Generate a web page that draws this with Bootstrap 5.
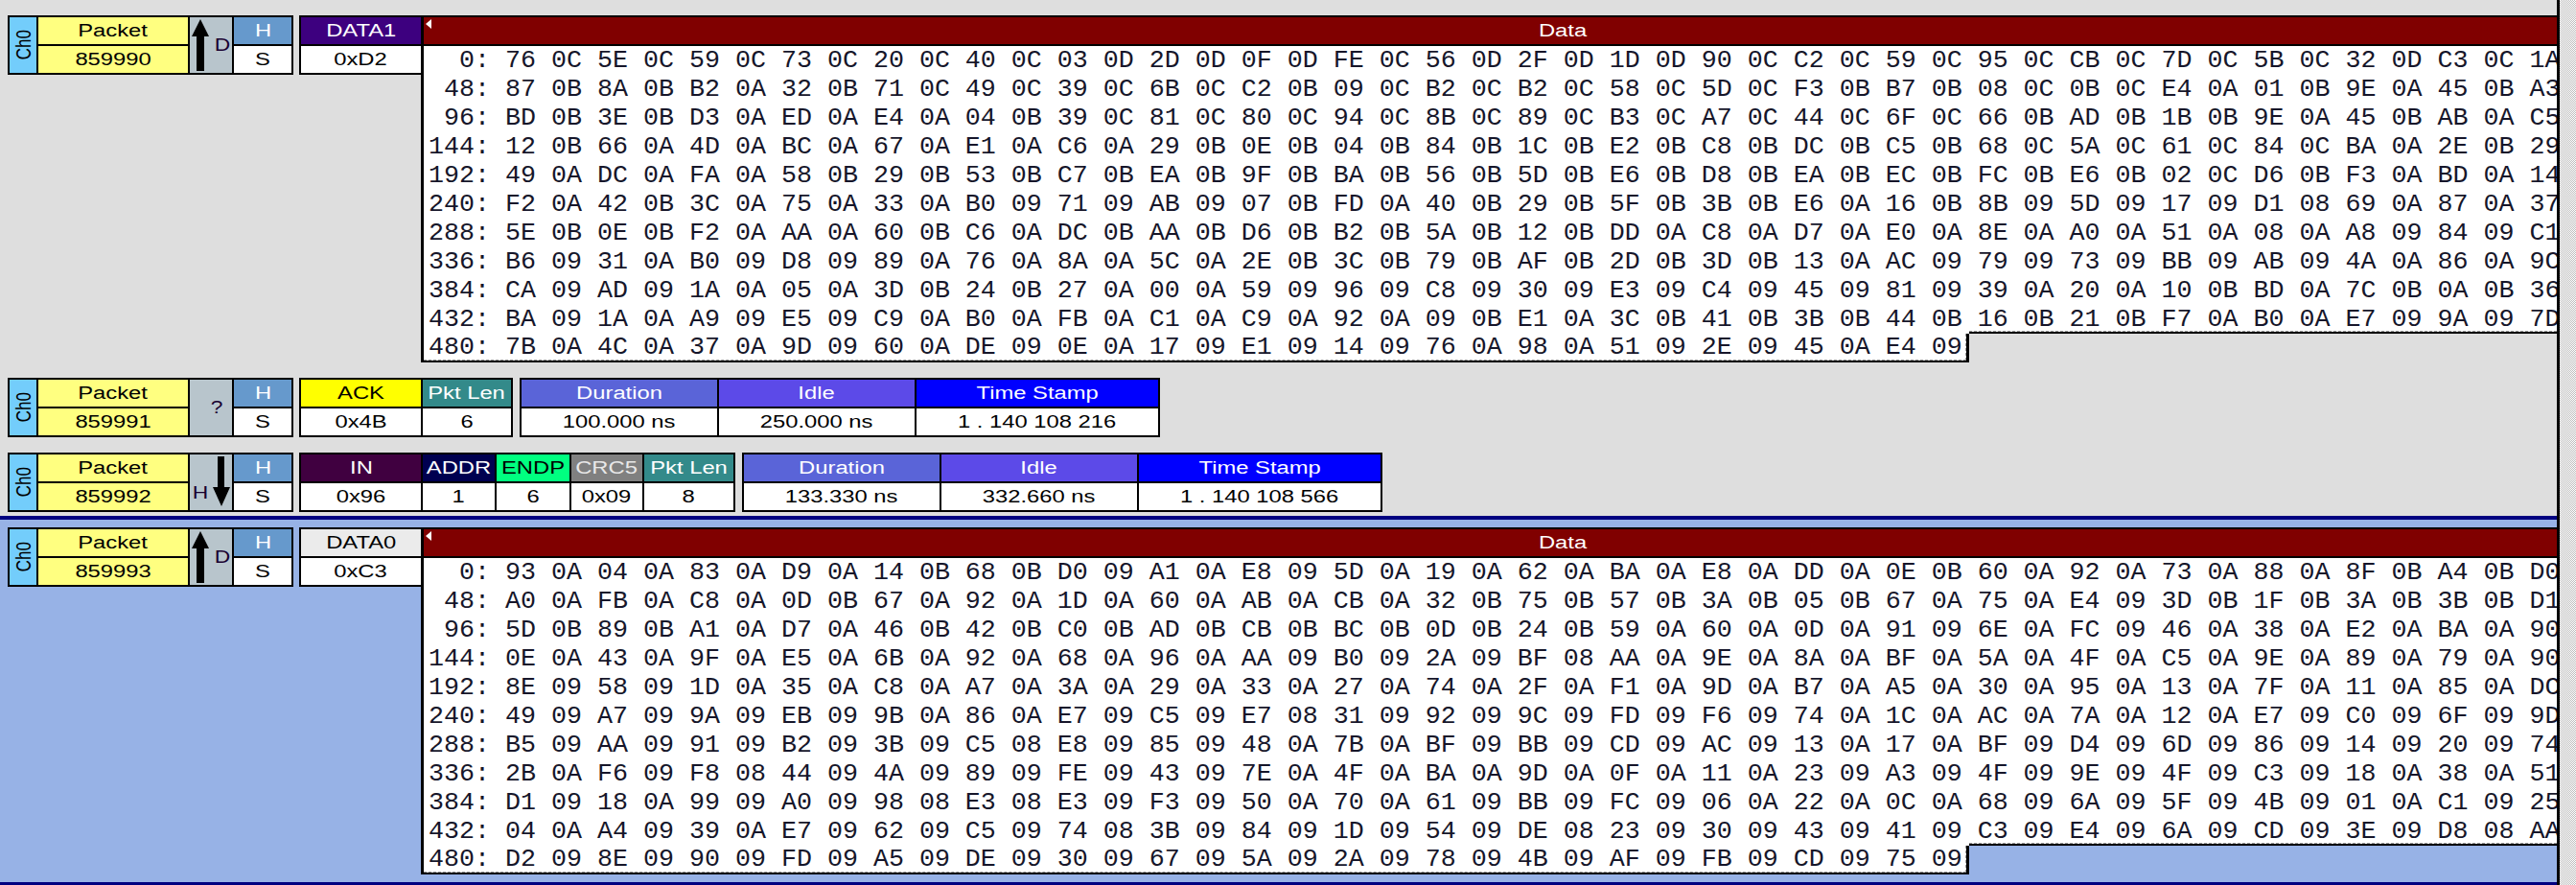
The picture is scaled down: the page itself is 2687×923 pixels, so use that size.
<!doctype html>
<html lang="en">
<head>
<meta charset="utf-8">
<title>USB packet trace</title>
<link href="https://cdn.jsdelivr.net/npm/bootstrap@5.3.0/dist/css/bootstrap.min.css" rel="stylesheet">
<style>
html,body{margin:0;height:923px;overflow:hidden;background:#dedede}
body{font-family:"Liberation Sans",Arial,sans-serif;font-size:18px;color:#000;line-height:28px}
.trace-main{width:2670px;height:923px;border-right:3px solid #000;flex:none}
.scroll-rail{flex:1;background:repeating-conic-gradient(#bdbdbd 0 25%,#fff 0 50%) 0 0/2px 2px}
.sec-a{height:538px;background:#dedede;padding:16px 0 0 8px}
.sec-b{height:382px;background:#97b2e6;border-top:4px solid #000080;padding:8px 0 0 8px}
.sec-end{height:3px;background:#000080}
.rec{height:362px;gap:6px}
.rec-short{height:62px;gap:6px;margin-bottom:0}
.mt-row2{margin-top:16px}
.mt-row3{margin-top:16px}
.pkt{border:2px solid #000;height:62px;background:#000;gap:2px;flex:none}
.pkt-open{border-right:0}
.gap-fields{gap:7px}
.col-cell{display:flex;flex-direction:column;gap:2px;flex:none}
.hd,.vl{height:28px;text-align:center;white-space:nowrap;overflow:hidden}
.vl{background:#fff}
.tx{display:inline-block;transform:scaleX(1.32)}
.ch-cell{width:28px;background:#73cdfb;display:flex;align-items:center;justify-content:center;flex:none}
.ch-tx{writing-mode:vertical-rl;transform:rotate(180deg) scaleX(1.32);font-size:17px;line-height:17px}
.dir-cell{width:44px;background:#b8c5cc;flex:none;display:flex;align-items:center;color:#180030;font-size:19px}
.dir-cell .tx{transform:scaleX(1.2)}
.up-ic{margin-left:1px;align-self:flex-start;margin-top:2px;flex:none}
.dn-ic{align-self:flex-start;margin-top:2px;margin-left:5px;flex:none}
.dir-d{margin-left:6px}
.dir-h{margin-left:4px;margin-top:22px}
.dir-q{width:100%;text-align:center;padding-left:10px}
.w-pk{width:156px}.bg-pk{background:#ffff80}
.w-h{width:60px}.bg-h{background:#6699cc;color:#fff}
.w-125{width:125px}.w-len{width:92px}.w-dur{width:204px}.w-ts{width:252px}
.w-addr{width:75px}.w-endp{width:76px}.w-crc{width:74px}.w-len2{width:93px}
.bg-data1{background:#3d007f;color:#fff}.bg-data0{background:#ebebeb}
.bg-ack{background:#ff0}.bg-len{background:#338a8a;color:#fff}
.bg-dur{background:#5a64d8;color:#fff}.bg-idle{background:#5c4ae8;color:#fff}.bg-ts{background:#00f;color:#fff}
.bg-in{background:#400040;color:#fff}.bg-addr{background:#000050;color:#fff}.bg-endp{background:#00ff80}.bg-crc{background:#808080;color:#e8e8e8}
.dpanel{flex:1;min-width:0;height:362px;border-left:3px solid #000;overflow:hidden;margin-left:-6px;position:relative}
.dhead{height:32px;background:#800000;border-top:2px solid #000;border-bottom:2px solid #000;color:#fff;text-align:center;padding-left:151px;line-height:28px}
.dtri{position:absolute;left:2px;top:4px}
.dbody{background:#fff;font-family:"Liberation Mono","Courier New",monospace;font-size:26.67px;line-height:30px;color:#16162a}
.dln{height:30px;padding-left:5px;overflow:hidden;white-space:pre}
.dlast{height:30px;overflow:visible}
.dlast-cell{width:1612px;height:30px;background:#fff;border-right:3px solid #000;border-bottom:2px solid #000;flex:none;overflow:hidden}
.dlast-in{height:28px;padding-left:5px;border-bottom:1px dashed #9a9a9a;border-right:1px dashed #9a9a9a;line-height:29px;overflow:hidden;white-space:pre}
.dfill{flex:1;height:33px;margin-top:-3px;background:#fff;border-top:1px dashed #9a9a9a;position:relative}
.dfill-in{height:32px;border-top:2px solid #000}
.dfill-a{background:#dedede}.dfill-b{background:#97b2e6}
</style>
</head>
<body>
<div class="d-flex">
<div class="trace-main d-flex flex-column">

<section class="sec-a">
  <div class="rec d-flex align-items-start">
    <div class="pkt d-flex">
      <div class="ch-cell"><span class="ch-tx">Ch0</span></div>
      <div class="col-cell w-pk"><div class="hd bg-pk"><span class="tx">Packet</span></div><div class="vl bg-pk"><span class="tx">859990</span></div></div>
      <div class="dir-cell"><svg class="up-ic" width="20" height="54" viewBox="0 0 20 54"><path d="M10 0 L19 18 L14 18 L14 54 L6 54 L6 18 L1 18 Z" fill="#000"/></svg><span class="tx dir-d">D</span></div>
      <div class="col-cell w-h"><div class="hd bg-h"><span class="tx">H</span></div><div class="vl"><span class="tx">S</span></div></div>
    </div>
    <div class="pkt pkt-open d-flex">
      <div class="col-cell w-125"><div class="hd bg-data1"><span class="tx">DATA1</span></div><div class="vl"><span class="tx">0xD2</span></div></div>
    </div>
    <div class="dpanel">
      <div class="dhead"><span class="tx">Data</span></div>
      <svg class="dtri" width="6" height="10" viewBox="0 0 6 10"><path d="M6 0 L0 5 L6 10 Z" fill="#fff"/></svg>
      <div class="dbody">
<div class="dln">  0: 76 0C 5E 0C 59 0C 73 0C 20 0C 40 0C 03 0D 2D 0D 0F 0D FE 0C 56 0D 2F 0D 1D 0D 90 0C C2 0C 59 0C 95 0C CB 0C 7D 0C 5B 0C 32 0D C3 0C 1A</div>
<div class="dln"> 48: 87 0B 8A 0B B2 0A 32 0B 71 0C 49 0C 39 0C 6B 0C C2 0B 09 0C B2 0C B2 0C 58 0C 5D 0C F3 0B B7 0B 08 0C 0B 0C E4 0A 01 0B 9E 0A 45 0B A3</div>
<div class="dln"> 96: BD 0B 3E 0B D3 0A ED 0A E4 0A 04 0B 39 0C 81 0C 80 0C 94 0C 8B 0C 89 0C B3 0C A7 0C 44 0C 6F 0C 66 0B AD 0B 1B 0B 9E 0A 45 0B AB 0A C5</div>
<div class="dln">144: 12 0B 66 0A 4D 0A BC 0A 67 0A E1 0A C6 0A 29 0B 0E 0B 04 0B 84 0B 1C 0B E2 0B C8 0B DC 0B C5 0B 68 0C 5A 0C 61 0C 84 0C BA 0A 2E 0B 29</div>
<div class="dln">192: 49 0A DC 0A FA 0A 58 0B 29 0B 53 0B C7 0B EA 0B 9F 0B BA 0B 56 0B 5D 0B E6 0B D8 0B EA 0B EC 0B FC 0B E6 0B 02 0C D6 0B F3 0A BD 0A 14</div>
<div class="dln">240: F2 0A 42 0B 3C 0A 75 0A 33 0A B0 09 71 09 AB 09 07 0B FD 0A 40 0B 29 0B 5F 0B 3B 0B E6 0A 16 0B 8B 09 5D 09 17 09 D1 08 69 0A 87 0A 37</div>
<div class="dln">288: 5E 0B 0E 0B F2 0A AA 0A 60 0B C6 0A DC 0B AA 0B D6 0B B2 0B 5A 0B 12 0B DD 0A C8 0A D7 0A E0 0A 8E 0A A0 0A 51 0A 08 0A A8 09 84 09 C1</div>
<div class="dln">336: B6 09 31 0A B0 09 D8 09 89 0A 76 0A 8A 0A 5C 0A 2E 0B 3C 0B 79 0B AF 0B 2D 0B 3D 0B 13 0A AC 09 79 09 73 09 BB 09 AB 09 4A 0A 86 0A 9C</div>
<div class="dln">384: CA 09 AD 09 1A 0A 05 0A 3D 0B 24 0B 27 0A 00 0A 59 09 96 09 C8 09 30 09 E3 09 C4 09 45 09 81 09 39 0A 20 0A 10 0B BD 0A 7C 0B 0A 0B 36</div>
<div class="dln">432: BA 09 1A 0A A9 09 E5 09 C9 0A B0 0A FB 0A C1 0A C9 0A 92 0A 09 0B E1 0A 3C 0B 41 0B 3B 0B 44 0B 16 0B 21 0B F7 0A B0 0A E7 09 9A 09 7D</div>
<div class="dlast d-flex"><div class="dlast-cell"><div class="dlast-in">480: 7B 0A 4C 0A 37 0A 9D 09 60 0A DE 09 0E 0A 17 09 E1 09 14 09 76 0A 98 0A 51 09 2E 09 45 0A E4 09</div></div><div class="dfill"><div class="dfill-in dfill-a"></div></div></div>
      </div>
    </div>
  </div>

  <div class="rec-short d-flex align-items-start mt-row2">
    <div class="pkt d-flex">
      <div class="ch-cell"><span class="ch-tx">Ch0</span></div>
      <div class="col-cell w-pk"><div class="hd bg-pk"><span class="tx">Packet</span></div><div class="vl bg-pk"><span class="tx">859991</span></div></div>
      <div class="dir-cell"><span class="tx dir-q">?</span></div>
      <div class="col-cell w-h"><div class="hd bg-h"><span class="tx">H</span></div><div class="vl"><span class="tx">S</span></div></div>
    </div>
    <div class="d-flex gap-fields">
      <div class="pkt d-flex">
        <div class="col-cell w-125"><div class="hd bg-ack"><span class="tx">ACK</span></div><div class="vl"><span class="tx">0x4B</span></div></div>
        <div class="col-cell w-len"><div class="hd bg-len"><span class="tx">Pkt Len</span></div><div class="vl"><span class="tx">6</span></div></div>
      </div>
      <div class="pkt d-flex">
        <div class="col-cell w-dur"><div class="hd bg-dur"><span class="tx">Duration</span></div><div class="vl"><span class="tx">100.000 ns</span></div></div>
        <div class="col-cell w-dur"><div class="hd bg-idle"><span class="tx">Idle</span></div><div class="vl"><span class="tx">250.000 ns</span></div></div>
        <div class="col-cell w-ts"><div class="hd bg-ts"><span class="tx">Time Stamp</span></div><div class="vl"><span class="tx">1 . 140 108 216</span></div></div>
      </div>
    </div>
  </div>

  <div class="rec-short d-flex align-items-start mt-row3">
    <div class="pkt d-flex">
      <div class="ch-cell"><span class="ch-tx">Ch0</span></div>
      <div class="col-cell w-pk"><div class="hd bg-pk"><span class="tx">Packet</span></div><div class="vl bg-pk"><span class="tx">859992</span></div></div>
      <div class="dir-cell"><span class="tx dir-h">H</span><svg class="dn-ic" width="20" height="52" viewBox="0 0 20 52"><path d="M6 0 L13 0 L13 32 L19 32 L10 52 L1 32 L6 32 Z" fill="#000"/></svg></div>
      <div class="col-cell w-h"><div class="hd bg-h"><span class="tx">H</span></div><div class="vl"><span class="tx">S</span></div></div>
    </div>
    <div class="d-flex gap-fields">
      <div class="pkt d-flex">
        <div class="col-cell w-125"><div class="hd bg-in"><span class="tx">IN</span></div><div class="vl"><span class="tx">0x96</span></div></div>
        <div class="col-cell w-addr"><div class="hd bg-addr"><span class="tx">ADDR</span></div><div class="vl"><span class="tx">1</span></div></div>
        <div class="col-cell w-endp"><div class="hd bg-endp"><span class="tx">ENDP</span></div><div class="vl"><span class="tx">6</span></div></div>
        <div class="col-cell w-crc"><div class="hd bg-crc"><span class="tx">CRC5</span></div><div class="vl"><span class="tx">0x09</span></div></div>
        <div class="col-cell w-len2"><div class="hd bg-len"><span class="tx">Pkt Len</span></div><div class="vl"><span class="tx">8</span></div></div>
      </div>
      <div class="pkt d-flex">
        <div class="col-cell w-dur"><div class="hd bg-dur"><span class="tx">Duration</span></div><div class="vl"><span class="tx">133.330 ns</span></div></div>
        <div class="col-cell w-dur"><div class="hd bg-idle"><span class="tx">Idle</span></div><div class="vl"><span class="tx">332.660 ns</span></div></div>
        <div class="col-cell w-ts"><div class="hd bg-ts"><span class="tx">Time Stamp</span></div><div class="vl"><span class="tx">1 . 140 108 566</span></div></div>
      </div>
    </div>
  </div>
</section>

<section class="sec-b">
  <div class="rec d-flex align-items-start">
    <div class="pkt d-flex">
      <div class="ch-cell"><span class="ch-tx">Ch0</span></div>
      <div class="col-cell w-pk"><div class="hd bg-pk"><span class="tx">Packet</span></div><div class="vl bg-pk"><span class="tx">859993</span></div></div>
      <div class="dir-cell"><svg class="up-ic" width="20" height="54" viewBox="0 0 20 54"><path d="M10 0 L19 18 L14 18 L14 54 L6 54 L6 18 L1 18 Z" fill="#000"/></svg><span class="tx dir-d">D</span></div>
      <div class="col-cell w-h"><div class="hd bg-h"><span class="tx">H</span></div><div class="vl"><span class="tx">S</span></div></div>
    </div>
    <div class="pkt pkt-open d-flex">
      <div class="col-cell w-125"><div class="hd bg-data0"><span class="tx">DATA0</span></div><div class="vl"><span class="tx">0xC3</span></div></div>
    </div>
    <div class="dpanel">
      <div class="dhead"><span class="tx">Data</span></div>
      <svg class="dtri" width="6" height="10" viewBox="0 0 6 10"><path d="M6 0 L0 5 L6 10 Z" fill="#fff"/></svg>
      <div class="dbody">
<div class="dln">  0: 93 0A 04 0A 83 0A D9 0A 14 0B 68 0B D0 09 A1 0A E8 09 5D 0A 19 0A 62 0A BA 0A E8 0A DD 0A 0E 0B 60 0A 92 0A 73 0A 88 0A 8F 0B A4 0B D0</div>
<div class="dln"> 48: A0 0A FB 0A C8 0A 0D 0B 67 0A 92 0A 1D 0A 60 0A AB 0A CB 0A 32 0B 75 0B 57 0B 3A 0B 05 0B 67 0A 75 0A E4 09 3D 0B 1F 0B 3A 0B 3B 0B D1</div>
<div class="dln"> 96: 5D 0B 89 0B A1 0A D7 0A 46 0B 42 0B C0 0B AD 0B CB 0B BC 0B 0D 0B 24 0B 59 0A 60 0A 0D 0A 91 09 6E 0A FC 09 46 0A 38 0A E2 0A BA 0A 90</div>
<div class="dln">144: 0E 0A 43 0A 9F 0A E5 0A 6B 0A 92 0A 68 0A 96 0A AA 09 B0 09 2A 09 BF 08 AA 0A 9E 0A 8A 0A BF 0A 5A 0A 4F 0A C5 0A 9E 0A 89 0A 79 0A 90</div>
<div class="dln">192: 8E 09 58 09 1D 0A 35 0A C8 0A A7 0A 3A 0A 29 0A 33 0A 27 0A 74 0A 2F 0A F1 0A 9D 0A B7 0A A5 0A 30 0A 95 0A 13 0A 7F 0A 11 0A 85 0A DC</div>
<div class="dln">240: 49 09 A7 09 9A 09 EB 09 9B 0A 86 0A E7 09 C5 09 E7 08 31 09 92 09 9C 09 FD 09 F6 09 74 0A 1C 0A AC 0A 7A 0A 12 0A E7 09 C0 09 6F 09 9D</div>
<div class="dln">288: B5 09 AA 09 91 09 B2 09 3B 09 C5 08 E8 09 85 09 48 0A 7B 0A BF 09 BB 09 CD 09 AC 09 13 0A 17 0A BF 09 D4 09 6D 09 86 09 14 09 20 09 74</div>
<div class="dln">336: 2B 0A F6 09 F8 08 44 09 4A 09 89 09 FE 09 43 09 7E 0A 4F 0A BA 0A 9D 0A 0F 0A 11 0A 23 09 A3 09 4F 09 9E 09 4F 09 C3 09 18 0A 38 0A 51</div>
<div class="dln">384: D1 09 18 0A 99 09 A0 09 98 08 E3 08 E3 09 F3 09 50 0A 70 0A 61 09 BB 09 FC 09 06 0A 22 0A 0C 0A 68 09 6A 09 5F 09 4B 09 01 0A C1 09 25</div>
<div class="dln">432: 04 0A A4 09 39 0A E7 09 62 09 C5 09 74 08 3B 09 84 09 1D 09 54 09 DE 08 23 09 30 09 43 09 41 09 C3 09 E4 09 6A 09 CD 09 3E 09 D8 08 AA</div>
<div class="dlast d-flex"><div class="dlast-cell"><div class="dlast-in">480: D2 09 8E 09 90 09 FD 09 A5 09 DE 09 30 09 67 09 5A 09 2A 09 78 09 4B 09 AF 09 FB 09 CD 09 75 09</div></div><div class="dfill"><div class="dfill-in dfill-b"></div></div></div>
      </div>
    </div>
  </div>
</section>
<div class="sec-end"></div>
</div>
<div class="scroll-rail"></div>
</div>
<script src="https://cdn.jsdelivr.net/npm/bootstrap@5.3.0/dist/js/bootstrap.bundle.min.js"></script>
</body>
</html>
